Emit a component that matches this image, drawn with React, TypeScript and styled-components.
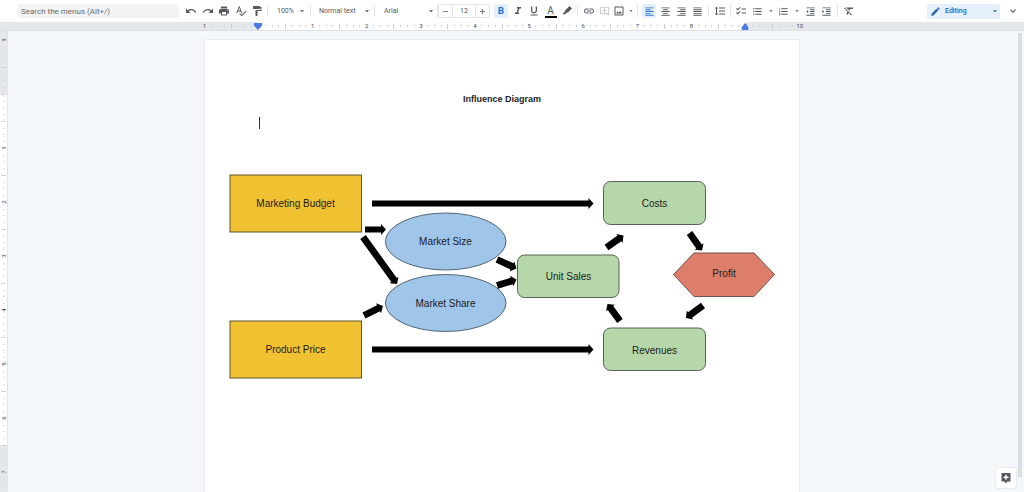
import React from "react";
import styled, { createGlobalStyle, css } from "styled-components";
import {
  MdUndo, MdRedo, MdPrint, MdSpellcheck, MdFormatPaint, MdArrowDropDown, MdRemove, MdAdd,
  MdFormatBold, MdFormatItalic, MdFormatUnderlined, MdLink, MdOutlineAddComment, MdOutlineImage,
  MdFormatAlignLeft, MdFormatAlignCenter, MdFormatAlignRight, MdFormatAlignJustify,
  MdFormatLineSpacing, MdChecklist, MdFormatListBulleted, MdFormatListNumbered,
  MdFormatIndentDecrease, MdFormatIndentIncrease, MdFormatClear, MdEdit, MdKeyboardArrowDown,
} from "react-icons/md";

const Global = createGlobalStyle`
  * { box-sizing: border-box; }
  body { margin: 0; font-family: Roboto, "Liberation Sans", sans-serif; background: #f5f8fb; }
  button, input, select { font: inherit; color: inherit; margin: 0; }
`;

const Shell = styled.div`
  display: flex;
  flex-direction: column;
  height: 100vh;
  overflow: hidden;
  color: #55595e;
`;

const Toolbar = styled.header`
  display: flex;
  align-items: center;
  flex: none;
  height: 22px;
  padding: 0 4px 0 17px;
  background: #fff;
`;

const Search = styled.input`
  width: 162px;
  height: 14px;
  margin-right: 5px;
  padding: 0 4px;
  border: 0;
  border-radius: 3px;
  background: #f1f3f4;
  font-size: 8px;
  &::placeholder { color: #686c70; opacity: 1; }
`;

const Group = styled.div<{ $w: number }>`
  display: flex;
  align-items: center;
  justify-content: space-between;
  flex: none;
  width: ${(p) => p.$w}px;
`;

const Divider = styled.span<{ $l?: number; $r?: number }>`
  flex: none;
  width: 1px;
  height: 12px;
  margin: 0 ${(p) => p.$r ?? 4}px 0 ${(p) => p.$l ?? 3}px;
  background: #e2e4e7;
`;

const Tool = styled.button<{ $on?: boolean; $faint?: boolean; $narrow?: boolean }>`
  display: flex;
  align-items: center;
  justify-content: center;
  flex: none;
  width: ${(p) => (p.$narrow ? 8 : 14)}px;
  height: 14px;
  padding: 0;
  border: 0;
  border-radius: 2px;
  background: ${(p) => (p.$on ? "#e3effd" : "transparent")};
  color: ${(p) => (p.$on ? "#2f6fd0" : p.$faint ? "#c4c7ca" : "#55595e")};
  font-size: ${(p) => (p.$narrow ? 10 : 12)}px;
`;

/* Line-based icons (alignment, lists) are drawn a size smaller. */
const LineTool = styled(Tool)`
  font-size: 11px;
`;

const TextColor = styled.span`
  width: 12px;
  height: 12px;
  margin-top: 2px;
  border-bottom: 2px solid #000;
  font-size: 10px;
  line-height: 10px;
  text-align: center;
`;

const Picker = styled.span<{ $w: number }>`
  display: flex;
  align-items: center;
  flex: none;
  width: ${(p) => p.$w}px;
  font-size: 10px;
`;

const Select = styled.select`
  appearance: none;
  flex: 1;
  min-width: 0;
  height: 14px;
  padding: 0;
  border: 0;
  background: transparent;
  font-size: 7px;
`;

const Size = styled.div`
  display: grid;
  grid-template-columns: 13px 24px 13px;
  flex: none;
  height: 14px;
  margin-right: 4px;
  border: 1px solid #e2e4e7;
  border-radius: 1px;
`;

const SizeButton = styled.button`
  display: flex;
  align-items: center;
  justify-content: center;
  padding: 0;
  border: 0;
  background: transparent;
  font-size: 9px;
`;

const SizeInput = styled.input`
  width: 100%;
  min-width: 0;
  padding: 0;
  border: solid #e2e4e7;
  border-width: 0 1px;
  background: transparent;
  font-size: 7px;
  text-align: center;
`;

const Mode = styled.button`
  display: flex;
  align-items: center;
  flex: none;
  width: 73px;
  height: 15px;
  margin-left: auto;
  padding: 0 0 0 3px;
  border: 0;
  border-radius: 2px;
  background: #e6f0fd;
  color: #2b63ad;
  font-size: 7px;
  font-weight: 500;
  gap: 4px;
  svg { font-size: 11px; }
  svg:last-child { margin-left: auto; font-size: 10px; }
`;

const Collapse = styled(Tool)`
  margin-left: 6px;
`;

const RulerBar = styled.div`
  display: flex;
  justify-content: center;
  flex: none;
  height: 9px;
  padding-right: 20px;
  background: #e5e8eb;
  border-bottom: 1px solid #dcdfe3;
  overflow: hidden;
`;

const Ruler = styled.div`
  position: relative;
  display: flex;
  flex: none;
  width: 602px;
  background: linear-gradient(to right, transparent 57px, #fff 57px, #fff 544px, transparent 544px);
`;

const slot = css`
  display: flex;
  flex: 1 1 0;
  min-width: 0;
  min-height: 0;
  align-items: center;
  justify-content: center;
  color: #44484c;
  font-size: 6px;
  line-height: 8px;
`;

const Slot = styled.span`${slot}`;
const SideSlot = styled.span`${slot}`;

const Tick = styled.i<{ $tall: boolean }>`
  width: 1px;
  height: ${(p) => (p.$tall ? 5 : 2)}px;
  background: ${(p) => (p.$tall ? "#c8ccd0" : "#d0d3d7")};
`;

const SideTick = styled.i<{ $tall: boolean }>`
  width: ${(p) => (p.$tall ? 5 : 2)}px;
  height: 1px;
  background: ${(p) => (p.$tall ? "#ced2d6" : "#d6dade")};
`;

const Turned = styled.span`
  transform: rotate(-90deg);
`;

const Marker = styled.i<{ $x: number }>`
  position: absolute;
  top: 1px;
  left: ${(p) => p.$x}px;
  width: 8px;
  height: 7px;
  background: #4a7be0;
  clip-path: polygon(0 0, 100% 0, 100% 40%, 50% 100%, 0 40%);
`;

const EndMarker = styled(Marker)`
  clip-path: polygon(50% 0, 90% 60%, 90% 100%, 10% 100%, 10% 60%);
`;

const Workspace = styled.div`
  position: relative;
  display: flex;
  flex: 1;
  min-height: 0;
`;

const SideRuler = styled.div`
  display: flex;
  flex-direction: column;
  flex: none;
  width: 8px;
  padding-top: 6px;
  border-right: 1px solid #e2e5e8;
  background: linear-gradient(#e5e8eb 63px, #fff 63px, #fff 414px, #e5e8eb 414px);
  overflow: hidden;
`;

const SideScale = styled.div`
  display: flex;
  flex-direction: column;
  flex: none;
  height: 486px;
`;

const Canvas = styled.main`
  display: flex;
  justify-content: center;
  flex: 1;
  min-width: 0;
  padding: 8px 28px 0 0;
  overflow: hidden;
`;

const Page = styled.article`
  flex: none;
  width: 596px;
  height: 460px;
  padding: 53px 19px;
  border: 1px solid #e9edf0;
  background: #fff;
  font-family: "Liberation Sans", Arial, sans-serif;
  color: #1c1c1c;
`;

const Title = styled.h1`
  margin: 0;
  font-size: 9px;
  line-height: 12px;
  text-align: center;
`;

const Caret = styled.p`
  width: 1px;
  height: 12px;
  margin: 12px 0 41px 35px;
  background: #333;
`;

const Drawing = styled.svg`
  display: block;
  width: 100%;
  font-size: 10px;
  text-anchor: middle;
  fill: #1c1c1c;
`;

const Scrollbar = styled.div`
  position: absolute;
  top: 2px;
  right: 2px;
  bottom: 15px;
  width: 4px;
  background: #dadde0;
`;

const Explore = styled.button`
  position: absolute;
  right: 8px;
  bottom: 4px;
  display: flex;
  align-items: center;
  justify-content: center;
  width: 20px;
  height: 20px;
  padding: 0;
  border: 0;
  border-radius: 2px;
  background: #fff;
  box-shadow: 0 0 2px #c4c9ce;
`;

const horizontal = Array.from({ length: 89 }, (_, i) => i);
const vertical = Array.from({ length: 72 }, (_, i) => i);
const isNumber = (i: number) => i % 8 === 0 && i !== 8;

/* Block arrow from a tail point to a tip point. */
function Arrow({ from, to, half = 3.4 }: { from: [number, number]; to: [number, number]; half?: number }) {
  const dx = to[0] - from[0];
  const dy = to[1] - from[1];
  const length = Math.hypot(dx, dy);
  const angle = (Math.atan2(dy, dx) * 180) / Math.PI;
  const neck = length - 5;
  return (
    <path
      fill="#000"
      transform={`translate(${from[0]} ${from[1]}) rotate(${angle})`}
      d={`M0 ${-half}H${neck}V-5.500L${length} 0L${neck} 5.500V${half}H0Z`}
    />
  );
}

const outline = { stroke: "#5b5f58", strokeWidth: 1 };

function Diagram() {
  return (
    <Drawing viewBox="224 170 556 212" role="img" aria-label="Influence diagram of profit">
      <g fill="#f0c232" {...outline} stroke="#5e532c">
        <rect x="230" y="175" width="131.5" height="57" />
        <rect x="230" y="321" width="131.5" height="57" />
      </g>
      <g fill="#9fc5e9" {...outline} stroke="#526577">
        <ellipse cx="445.7" cy="241.5" rx="60.3" ry="28.5" />
        <ellipse cx="445.7" cy="303" rx="60.3" ry="28.5" />
      </g>
      <g fill="#b6d7a9" {...outline}>
        <rect x="517.5" y="255" width="101.5" height="42.5" rx="7" />
        <rect x="603.5" y="181.5" width="102" height="43" rx="7" />
        <rect x="603.5" y="328" width="102" height="42.5" rx="7" />
      </g>
      <path d="M673.5 274.5L694 253H754L774.5 274.5L754 296.5H694Z" fill="#dd7e6b" {...outline} stroke="#70534c" />
      <Arrow half={3} from={[372, 203.5]} to={[593.5, 203.5]} />
      <Arrow half={3} from={[372, 349.5]} to={[593.5, 349.5]} />
      <Arrow half={3} from={[365, 229.5]} to={[386, 229.5]} />
      <Arrow from={[363, 237]} to={[397, 284]} />
      <Arrow from={[364, 315.5]} to={[383, 306]} />
      <Arrow from={[497, 259.5]} to={[516.5, 268.5]} />
      <Arrow from={[497, 285.5]} to={[516.5, 279.5]} />
      <Arrow from={[606.5, 247.5]} to={[623.5, 235.5]} />
      <Arrow from={[689.5, 233]} to={[702, 250.5]} />
      <Arrow from={[703, 305.5]} to={[686, 318]} />
      <Arrow from={[620, 321]} to={[607.5, 304]} />
      <text x="295.5" y="207">Marketing Budget</text>
      <text x="295.5" y="353">Product Price</text>
      <text x="445.5" y="245">Market Size</text>
      <text x="445.5" y="307">Market Share</text>
      <text x="568.5" y="280">Unit Sales</text>
      <text x="654.5" y="207">Costs</text>
      <text x="654.5" y="354">Revenues</text>
      <text x="724" y="277">Profit</text>
    </Drawing>
  );
}

function Choice({ label, value, width }: { label: string; value: string; width: number }) {
  return (
    <Picker $w={width}>
      <Select aria-label={label} defaultValue={value}>
        <option>{value}</option>
      </Select>
      <MdArrowDropDown />
    </Picker>
  );
}

export default function App() {
  return (
    <Shell>
      <Global />
      <Toolbar>
        <Search aria-label="Search the menus" placeholder="Search the menus (Alt+/)" />
        <Group $w={80}>
          <Tool aria-label="Undo"><MdUndo /></Tool>
          <Tool aria-label="Redo"><MdRedo /></Tool>
          <Tool aria-label="Print"><MdPrint /></Tool>
          <Tool aria-label="Spelling check"><MdSpellcheck /></Tool>
          <Tool aria-label="Paint format"><MdFormatPaint /></Tool>
        </Group>
        <Divider $r={9} />
        <Choice label="Zoom" value="100%" width={30} />
        <Divider $r={8} />
        <Choice label="Style" value="Normal text" width={53} />
        <Divider $l={2} $r={9} />
        <Choice label="Font" value="Arial" width={52} />
        <Divider $l={1} $r={0} />
        <Size>
          <SizeButton aria-label="Decrease font size"><MdRemove /></SizeButton>
          <SizeInput aria-label="Font size" defaultValue="12" />
          <SizeButton aria-label="Increase font size"><MdAdd /></SizeButton>
        </Size>
        <Group $w={80}>
          <Tool $on aria-label="Bold"><MdFormatBold /></Tool>
          <Tool aria-label="Italic"><MdFormatItalic /></Tool>
          <Tool aria-label="Underline"><MdFormatUnderlined /></Tool>
          <Tool aria-label="Text color"><TextColor>A</TextColor></Tool>
          <Tool aria-label="Highlight color">
            <svg width="10" height="10" viewBox="0 0 24 24" fill="currentColor">
              <path d="M9 9L18 0L24 6L15 15L11 16L8 20H1L6 14Z" />
            </svg>
          </Tool>
        </Group>
        <Divider />
        <Group $w={53}>
          <Tool aria-label="Insert link"><MdLink /></Tool>
          <LineTool $faint aria-label="Add comment"><MdOutlineAddComment /></LineTool>
          <Tool aria-label="Insert image"><MdOutlineImage /></Tool>
          <Tool $narrow aria-label="Image options"><MdArrowDropDown /></Tool>
        </Group>
        <Divider $l={2} />
        <Group $w={63}>
          <LineTool $on aria-label="Left align"><MdFormatAlignLeft /></LineTool>
          <LineTool aria-label="Center align"><MdFormatAlignCenter /></LineTool>
          <LineTool aria-label="Right align"><MdFormatAlignRight /></LineTool>
          <LineTool aria-label="Justify"><MdFormatAlignJustify /></LineTool>
        </Group>
        <Divider />
        <Tool aria-label="Line spacing"><MdFormatLineSpacing /></Tool>
        <Divider $r={3} />
        <Group $w={100}>
          <Tool aria-label="Checklist"><MdChecklist /></Tool>
          <LineTool aria-label="Bulleted list"><MdFormatListBulleted /></LineTool>
          <Tool $narrow aria-label="Bullet options"><MdArrowDropDown /></Tool>
          <LineTool aria-label="Numbered list"><MdFormatListNumbered /></LineTool>
          <Tool $narrow aria-label="Number options"><MdArrowDropDown /></Tool>
          <LineTool aria-label="Decrease indent"><MdFormatIndentDecrease /></LineTool>
          <LineTool aria-label="Increase indent"><MdFormatIndentIncrease /></LineTool>
        </Group>
        <Divider />
        <Tool aria-label="Clear formatting"><MdFormatClear /></Tool>
        <Mode><MdEdit />Editing<MdArrowDropDown /></Mode>
        <Collapse aria-label="Hide the menus"><MdKeyboardArrowDown /></Collapse>
      </Toolbar>
      <RulerBar>
        <Ruler>
          {horizontal.map((i) => (
            <Slot key={i}>{isNumber(i) ? Math.abs(i / 8 - 1) : <Tick $tall={i % 4 === 0} />}</Slot>
          ))}
          <Marker $x={53} />
          <EndMarker $x={540} />
        </Ruler>
      </RulerBar>
      <Workspace>
        <SideRuler>
          <SideScale>
            {vertical.map((i) => (
              <SideSlot key={i}>
                {isNumber(i) ? <Turned>{Math.abs(i / 8 - 1)}</Turned> : <SideTick $tall={i % 4 === 0} />}
              </SideSlot>
            ))}
          </SideScale>
        </SideRuler>
        <Canvas>
          <Page>
            <Title>Influence Diagram</Title>
            <Caret />
            <Diagram />
          </Page>
        </Canvas>
        <Scrollbar />
        <Explore aria-label="Explore">
          <svg width="12" height="12" viewBox="0 0 24 24" fill="#55595e">
            <path fillRule="evenodd" d="M3 2H21V19H15L12 23L9 19H3ZM12 4L10 8.500L5.500 10.500L10 12.500L12 17L14 12.500L18.500 10.500L14 8.500Z" />
          </svg>
        </Explore>
      </Workspace>
    </Shell>
  );
}
